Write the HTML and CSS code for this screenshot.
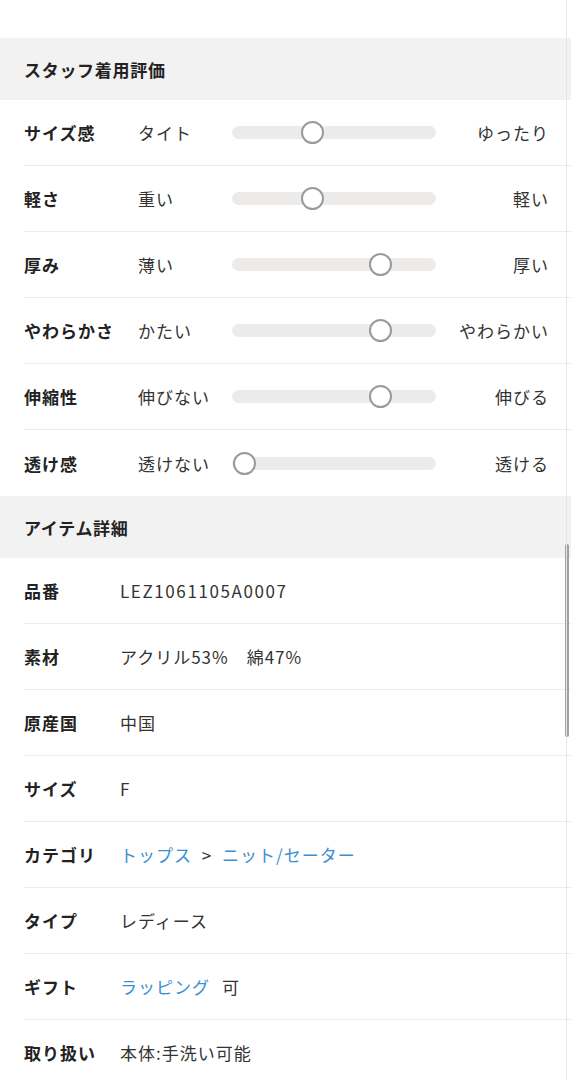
FILE: index.html
```html
<!DOCTYPE html>
<html lang="ja">
<head>
<meta charset="utf-8">
<link rel="stylesheet" href="styles.css">
</head>
<body>
<div class="page">
  <div class="top"></div>
  <section>
    <h2 class="head">スタッフ着用評価</h2>
    <div class="srow"><span class="lab">サイズ感</span><span class="min">タイト</span><span class="track"><span class="knob" style="left: 80px"></span></span><span class="max">ゆったり</span></div>
    <div class="srow"><span class="lab">軽さ</span><span class="min">重い</span><span class="track"><span class="knob" style="left: 80px"></span></span><span class="max">軽い</span></div>
    <div class="srow"><span class="lab">厚み</span><span class="min">薄い</span><span class="track"><span class="knob" style="left: 148px"></span></span><span class="max">厚い</span></div>
    <div class="srow"><span class="lab">やわらかさ</span><span class="min">かたい</span><span class="track"><span class="knob" style="left: 148px"></span></span><span class="max">やわらかい</span></div>
    <div class="srow"><span class="lab">伸縮性</span><span class="min">伸びない</span><span class="track"><span class="knob" style="left: 148px"></span></span><span class="max">伸びる</span></div>
    <div class="srow last"><span class="lab">透け感</span><span class="min">透けない</span><span class="track"><span class="knob" style="left: 12px"></span></span><span class="max">透ける</span></div>
  </section>
  <section>
    <h2 class="head">アイテム詳細</h2>
    <div class="drow"><span class="dlab">品番</span><span class="val code">LEZ1061105A0007</span></div>
    <div class="drow"><span class="dlab">素材</span><span class="val">アクリル53%　綿47%</span></div>
    <div class="drow"><span class="dlab">原産国</span><span class="val">中国</span></div>
    <div class="drow"><span class="dlab">サイズ</span><span class="val">F</span></div>
    <div class="drow"><span class="dlab">カテゴリ</span><span class="val"><a class="link">トップス</a> <span class="gt">&gt;</span> <a class="link">ニット/セーター</a></span></div>
    <div class="drow"><span class="dlab">タイプ</span><span class="val">レディース</span></div>
    <div class="drow"><span class="dlab">ギフト</span><span class="val"><a class="link">ラッピング</a><span class="ok">可</span></span></div>
    <div class="drow"><span class="dlab">取り扱い</span><span class="val">本体:手洗い可能</span></div>
  </section>
  <div class="scrollbar"></div>
</div>
</body>
</html>
```
FILE: styles.css
```css
* { box-sizing: border-box; }
html, body { margin: 0; padding: 0; background: #fff; }
body {
  font-family: "Noto Sans CJK JP", "Noto Sans", sans-serif;
  color: #333;
  font-size: 17px;
  letter-spacing: 1px;
  overflow: hidden;
  height: 1080px;
}
.page {
  position: relative;
  width: 576px;
  height: 1080px;
  overflow: hidden;
  border-right: 5px solid #fff;
}
.page::after {
  content: "";
  position: absolute;
  top: 0; bottom: 0; right: 4px;
  width: 1px;
  background: #e6e6e6;
}
.top { height: 38px; }
.head {
  margin: 0;
  height: 62px;
  display: flex;
  align-items: center;
  padding-left: 24px;
  background: #f2f2f2;
  font-size: 17px;
  font-weight: 700;
  color: #222;
  letter-spacing: 0.7px;
}
.srow, .drow {
  height: 66px;
  margin-left: 24px;
  display: flex;
  align-items: center;
  border-bottom: 1px solid #ebebeb;
}
.srow.last { border-bottom: none; }
.lab, .dlab {
  font-weight: 700;
  color: #222;
  flex: none;
}
.lab { width: 114px; }
.dlab { width: 96px; }
.min { width: 94px; flex: none; color: #333; }
.track {
  position: relative;
  width: 204px;
  height: 13px;
  border-radius: 7px;
  background: #edebea;
  flex: none;
}
.knob {
  position: absolute;
  top: 50%;
  width: 23px;
  height: 23px;
  margin: -11.5px 0 0 -11.5px;
  border-radius: 50%;
  background: #fff;
  border: 2px solid #9a9a9a;
}
.max {
  flex: 1;
  text-align: right;
  padding-right: 22px;
  color: #333;
}
.val { color: #333; }
.code { letter-spacing: 1.6px; }
.link { color: #3b8fd0; text-decoration: none; }
.gt { color: #333; margin: 0 5px; }
.ok { margin-left: 12px; }
.scrollbar {
  position: absolute;
  left: 565px;
  top: 544px;
  width: 4px;
  height: 193px;
  border-radius: 2px;
  background: #a0a0a0;
}
```
